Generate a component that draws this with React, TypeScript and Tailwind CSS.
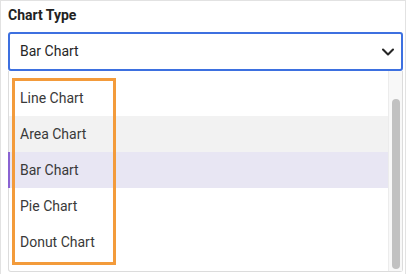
import { ChevronDown } from 'lucide-react';

const options = ['Line Chart', 'Area Chart', 'Bar Chart', 'Pie Chart', 'Donut Chart'];

const App = () => {
  const hovered = 'Area Chart';
  const selected = 'Bar Chart';

  return (
    <div className="relative w-[406px] h-[274px] overflow-hidden bg-white border-t border-l border-r border-[#e2e2e2] font-['Roboto',sans-serif]">
      <div className="pl-[7px] pt-[4px]">
        <div className="text-[14px] leading-5 font-bold text-[#222]">Chart Type</div>

        {/* Select */}
        <div className="mt-[7px] w-[395px] h-[39px] flex items-center justify-between border-2 border-[#3d70e0] rounded-[3px] pl-[10px] pr-[3px] text-[14px] text-[#262626]">
          <span>Bar Chart</span>
          <ChevronDown size={20} strokeWidth={2.5} className="text-[#262626]" />
        </div>

        {/* Menu */}
        <div className="w-[395px] h-[201px] flex border-l border-r border-b border-[#dcdcdc] rounded-b-[3px]">
          <div className="flex-1 pt-[9px]">
            {options.map((opt) => (
              <div
                key={opt}
                className={`relative h-9 flex items-center pl-[11px] text-[14px] text-[#393939] ${
                  opt === selected ? 'bg-[#e8e6f3]' : opt === hovered ? 'bg-[#f2f2f2]' : ''
                }`}
              >
                {opt === selected && <span className="absolute left-[-1px] top-0 h-full w-[2px] bg-[#8a63d2]" />}
                {opt}
              </div>
            ))}
          </div>
          <div className="w-[14px] bg-[#f8f8f8] border-l border-[#ececec] pt-[28px] pl-[3px]">
            <div className="w-[8px] h-[170px] rounded-full bg-[#c1c1c1]" />
          </div>
        </div>
      </div>

      {/* Annotation box */}
      <div className="absolute left-[11px] top-[77px] w-[104px] h-[187px] border-[3px] border-[#f39b3b]" />
    </div>
  );
};

export default App;
